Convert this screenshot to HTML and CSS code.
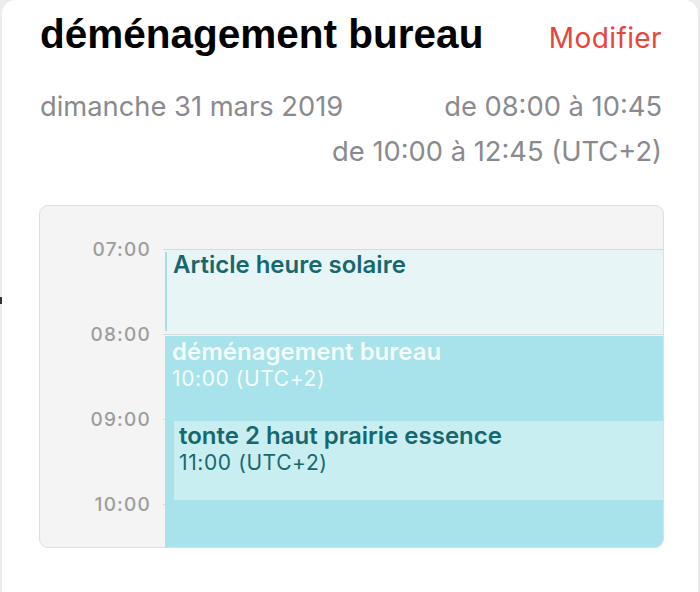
FILE: index.html
```html
<!DOCTYPE html>
<html lang="fr">
<head>
<meta charset="utf-8">
<title>déménagement bureau</title>
<link rel="stylesheet" href="styles.css">
</head>
<body>
<div class="panel">
  <header class="head">
    <h1 class="title">déménagement bureau</h1>
    <a class="edit">Modifier</a>
  </header>
  <div class="when">
    <div class="when-row">
      <span class="date">dimanche 31 mars 2019</span>
      <span class="range">de 08:00 à 10:45</span>
    </div>
    <div class="when-row right">
      <span class="range">de 10:00 à 12:45 (UTC+2)</span>
    </div>
  </div>
  <div class="card">
    <div class="grid">
      <div class="row"><span class="time">07:00</span><span class="line"></span></div>
      <div class="row"><span class="time">08:00</span><span class="line"></span></div>
      <div class="row"><span class="time">09:00</span><span class="line"></span></div>
      <div class="row last"><span class="time">10:00</span><span class="line"></span></div>
    </div>
    <div class="track">
      <div class="event ev-light">
        <div class="ev-title">Article heure solaire</div>
      </div>
      <div class="event ev-main">
        <div class="ev-title">déménagement bureau</div>
        <div class="ev-sub">10:00 (UTC+2)</div>
      </div>
      <div class="event ev-mid">
        <div class="ev-title">tonte 2 haut prairie essence</div>
        <div class="ev-sub">11:00 (UTC+2)</div>
      </div>
    </div>
  </div>
</div>
<span class="edge-mark"></span>
</body>
</html>
```
FILE: styles.css
```css
html, body {
  margin: 0;
  padding: 0;
}
body {
  position: relative;
  background: #ececec;
  width: 700px;
  height: 592px;
  overflow: hidden;
  font-family: Inter, "Liberation Sans", sans-serif;
}
.panel {
  box-sizing: border-box;
  margin-left: 2px;
  width: 696px;
  height: 600px;
  background: #fff;
  border-radius: 14px 14px 0 0;
  padding: 11px 36px 0 38px;
}
.head {
  display: flex;
  justify-content: space-between;
  align-items: baseline;
  height: 46px;
  white-space: nowrap;
}
.title {
  margin: 0;
  font-family: "Liberation Sans", sans-serif;
  font-weight: 700;
  font-size: 40.5px;
  line-height: 46px;
  color: #000;
}
.edit {
  font-size: 28px;
  color: #e6453d;
  letter-spacing: 0.4px;
}
.when {
  margin-top: 27px;
  color: #8a8a8e;
  font-size: 27.3px;
  line-height: 45px;
  white-space: nowrap;
}
.when-row {
  display: flex;
  justify-content: space-between;
}
.when-row.right {
  justify-content: flex-end;
}
.card {
  position: relative;
  margin-top: 31px;
  margin-left: -1px;
  margin-right: -2px;
  box-sizing: border-box;
  height: 343px;
  background: #f4f4f4;
  border: 1px solid #dedede;
  border-radius: 9px;
  overflow: hidden;
}
.grid {
  padding-top: 43px;
}
.row {
  display: grid;
  grid-template-columns: 123px 1fr;
  height: 85px;
}
.row.last {
  height: 43px;
}
.time {
  margin-top: -11px;
  padding-right: 12px;
  text-align: right;
  font-size: 19px;
  line-height: 24px;
  font-weight: 500;
  color: #9d9d9d;
  letter-spacing: 1.2px;
}
.line {
  border-top: 1px solid #d9d9d9;
}
.track {
  position: absolute;
  top: 0;
  bottom: 0;
  left: 125px;
  right: 0;
}
.event {
  position: absolute;
  box-sizing: border-box;
  right: 0;
  white-space: nowrap;
}
.ev-title {
  font-size: 24px;
  font-weight: 600;
  line-height: 28px;
}
.ev-sub {
  font-size: 21px;
  line-height: 26px;
  letter-spacing: 0.6px;
}
.ev-light {
  top: 44px;
  left: 0;
  height: 83px;
  background: #e7f5f7;
  color: #17686e;
  padding-top: 1px;
  padding-left: 8px;
}
.ev-light::before {
  content: "";
  position: absolute;
  left: 0;
  top: 2px;
  bottom: 2px;
  width: 2px;
  background: #a9dde4;
}
.ev-main {
  top: 130px;
  left: 0;
  bottom: 0;
  background: #a8e2ea;
  color: #f4fcfd;
  padding-top: 2px;
  padding-left: 7px;
}
.ev-mid {
  top: 215px;
  left: 9px;
  height: 79px;
  background: #c9eef2;
  color: #17686e;
  padding-top: 1px;
  padding-left: 5px;
}
.edge-mark {
  position: absolute;
  left: 0;
  top: 297px;
  width: 2px;
  height: 7px;
  background: #333;
}
```
